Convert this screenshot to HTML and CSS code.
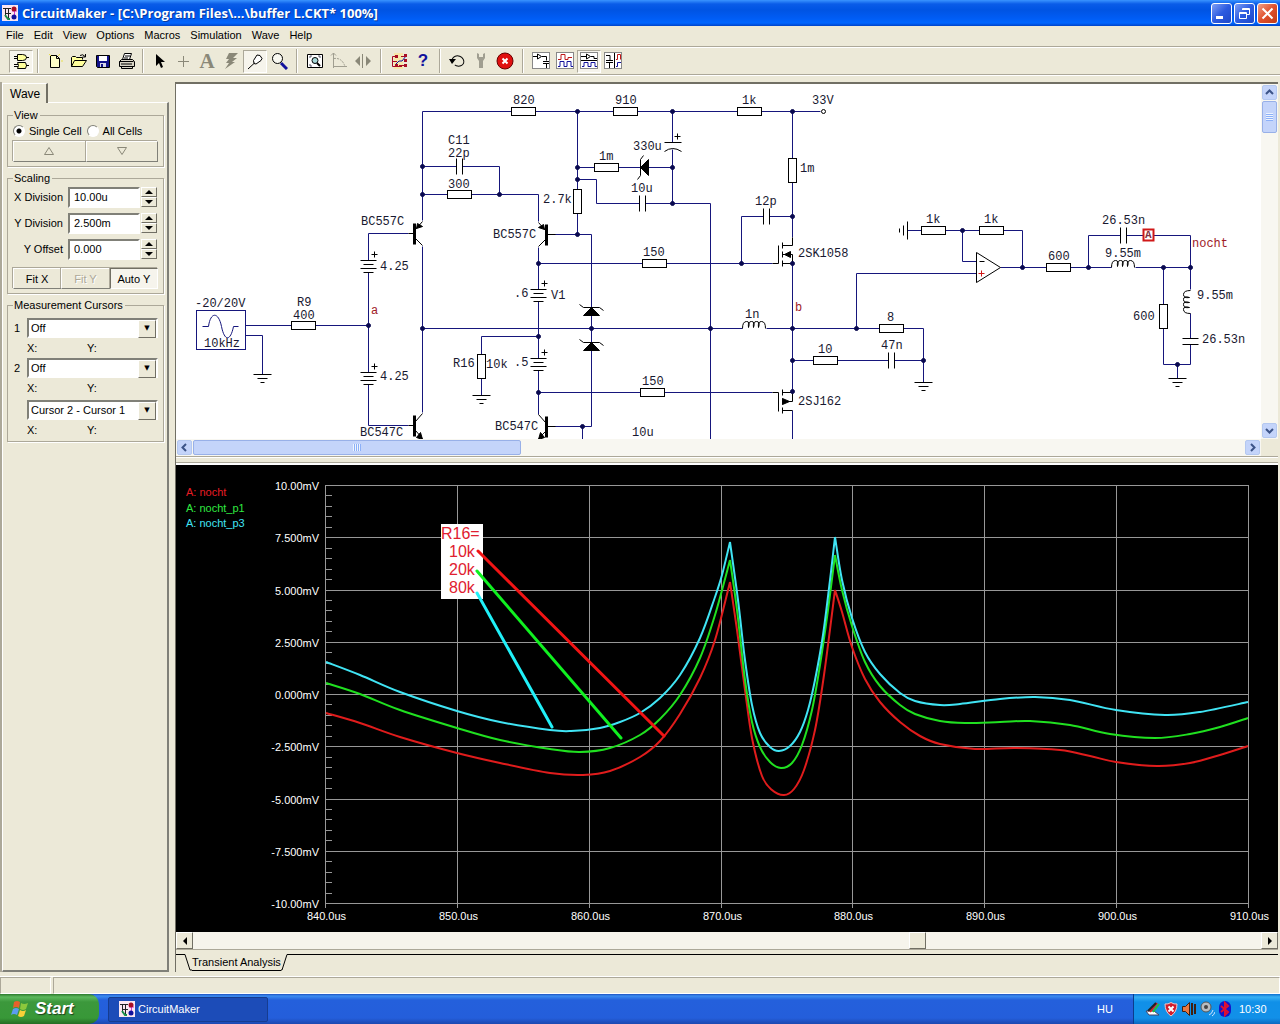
FILE: index.html
```html
<!DOCTYPE html>
<html lang="en">

<head>
  <meta charset="UTF-8">
  <meta name="viewport" content="width=device-width, initial-scale=1.0">
  <title>CircuitMaker</title>
  <link rel="stylesheet" href="styles.css">
</head>

<body>
  <svg class="symbols" aria-hidden="true">
    <defs>
      <symbol id="app-icon" viewBox="0 0 16 16">
        <rect width="16" height="16" fill="#fbe6f0" />
        <path d="M1 3.500h8M3.500 3v9M6.500 3v10M3 8.500h6" stroke="#222" fill="none" />
        <path d="M10 6h5M12.500 6v4" stroke="#d23ad2" fill="none" />
        <circle cx="12" cy="4" r="2.500" fill="#a80d24" />
        <circle cx="12" cy="12" r="2.500" fill="#12129c" />
        <path d="M3 10l3 4h2" stroke="#1b8f4a" stroke-width="2" fill="none" />
      </symbol>

      <g id="rh"><rect class="paper" x="-12" y="-4" width="24" height="8" /></g>
      <g id="rv"><rect class="paper" x="-4" y="-12" width="8" height="24" /></g>
      <g id="cap-h">
        <path class="gap" d="M-3 0h6" />
        <path d="M-3 -8v16M3 -8v16" />
      </g>
      <g id="battery">
        <path class="gap" d="M0 0v12" />
        <path d="M-8 0h16M-5 4h10M-8 8h16M-5 12h10M3 -6h6M6 -9v6" />
      </g>
      <g id="ground"><path d="M-9 0h18M-5 4h10M-2 8h4" /></g>
      <g id="coil">
        <path class="gap" d="M-12 0h24" />
        <path d="M-12 0q0-7 4-7t2 6q-1-6 3-6t2 6q-1-6 3-6t2 6q-1-6 3-6t4 7" />
      </g>
      <g id="zener">
        <path d="M-12 -3l4 3h16l4 3" />
        <path class="solid" d="M0 0l8 8h-16z" />
      </g>
    </defs>
  </svg>

  <header class="titlebar">
    <svg class="app-icon"><use href="#app-icon" /></svg>
    <h1>CircuitMaker - [C:\Program Files\...\buffer L.CKT* 100%]</h1>
    <div class="window-buttons">
      <button type="button" aria-label="Minimize"><svg viewBox="0 0 19 19"><path d="M4 13.500h7" stroke-width="3" /></svg></button>
      <button type="button" aria-label="Restore"><svg viewBox="0 0 19 19"><path d="M7.500 6V4.500h7v6H12M7 5.500h8" /><path d="M4.500 8.500h7v6h-7zM4 9.500h8" /></svg></button>
      <button type="button" class="close" aria-label="Close"><svg viewBox="0 0 19 19"><path d="M4.500 4.500l10 10M14.500 4.500l-10 10" stroke-width="2" /></svg></button>
    </div>
  </header>

  <nav class="menubar">
    <button type="button">File</button>
    <button type="button">Edit</button>
    <button type="button">View</button>
    <button type="button">Options</button>
    <button type="button">Macros</button>
    <button type="button">Simulation</button>
    <button type="button">Wave</button>
    <button type="button">Help</button>
  </nav>

  <div class="toolbar">
    <button type="button" class="pressed" aria-label="Parts"><svg viewBox="0 0 18 18"><path fill="#ffff9c" stroke="#000" d="M5.500 2.500h5q4 0 4 3t-4 3h-5z M5.500 10.500h8q2 3 0 6h-8q2-3 0-6z" /><path stroke="#000" d="M2 4.500h3M2 6.500h3M14 5.500h3M2 12.500h4M2 14.500h4M14 13.500h3" /></svg></button>
    <span class="sep"></span>
    <button type="button" aria-label="New"><svg viewBox="0 0 18 18"><path fill="#ffffc8" stroke="#000" d="M4.500 3.500h6l3 3v9h-9zM10.500 3.500v3h3" /><path stroke="#e8e04a" d="M3 2l2 2M14 2l-2 2M15 9h2" /></svg></button>
    <button type="button" aria-label="Open"><svg viewBox="0 0 18 18"><path fill="#ffff9c" stroke="#000" d="M1.500 14.500v-9l1-1h3l1 1h6v2M1.500 14.500l3-6h12l-4 6z" /><path fill="none" stroke="#000" d="M10 3.500q3-2 5 1M15.500 2v3h-3" /></svg></button>
    <button type="button" aria-label="Save"><svg viewBox="0 0 18 18"><path fill="#12128a" stroke="#000" d="M2.500 3.500h13v12h-12l-1-1z" /><path fill="#fff" d="M5 4h8v5H5z" /><path fill="#d8d8e8" d="M6 11h6v4H6z" /><path fill="#12128a" d="M7 12h2v3H7z" /></svg></button>
    <button type="button" aria-label="Print"><svg viewBox="0 0 18 18"><path fill="#fff" stroke="#000" d="M6.500 1.500h7l-2 6h-7zM7 4h5M6 6h4" /><path fill="#d8d4c4" stroke="#000" d="M1.500 9.500l2-2h11l2 2v5h-15zM1.500 9.500h14M3.500 14.500v2h11v-2M3 12h11" /></svg></button>
    <span class="sep narrow"></span>
    <button type="button" aria-label="Arrow"><svg viewBox="0 0 18 18"><path d="M6 2v12l3-3 2 5 2-1-2-5h4z" /></svg></button>
    <button type="button" aria-label="Wire"><svg viewBox="0 0 18 18"><path stroke="#8a8878" d="M4 9.500h11M9.500 4v11" /></svg></button>
    <button type="button" class="letter" aria-label="Text">A</button>
    <button type="button" aria-label="Delete"><svg viewBox="0 0 18 18"><path fill="#8a8878" d="M7 1h9l-5 5h4l-5 4h3L3 17l4-6H4l3-4H4z" /></svg></button>
    <button type="button" class="pressed" aria-label="Probe"><svg viewBox="0 0 18 18"><path fill="#fff" stroke="#000" d="M7.500 8.500L11 3l3 .500 2 3-1 2-5 3.500-2-.500zM8.500 11L2 17" /></svg></button>
    <button type="button" aria-label="Zoom"><svg viewBox="0 0 18 18"><circle cx="7.500" cy="6.500" r="5" fill="#f8f8f0" stroke="#000" /><path stroke="#12129c" stroke-width="3" d="M11 11l6 6" /></svg></button>
    <span class="sep wide"></span>
    <button type="button" aria-label="Zoom to fit"><svg viewBox="0 0 18 18"><path fill="#fff" stroke="#000" d="M1.500 2.500h15v13h-15z" /><path fill="none" stroke="#556" d="M4 6V4h2M12 4h2v2M4 12v2h2" /><circle cx="9" cy="8.500" r="3" fill="#a8d8d8" stroke="#000" /><path stroke="#000" stroke-width="2" d="M11 11l3 3" /></svg></button>
    <button type="button" aria-label="Rotate"><svg viewBox="0 0 18 18"><path fill="none" stroke="#a09e90" d="M3.500 1v15M1 3.500l2.500-2.500L6 3.500M4 14.500h13" /><path fill="none" stroke="#a09e90" stroke-dasharray="2 1" d="M4 6.500q8-1 11 8" /></svg></button>
    <button type="button" aria-label="Mirror"><svg viewBox="0 0 18 18"><path fill="#8a8878" d="M6 4v10L1 9zM12 4v10l5-5zM8 2h1v14H8z" /></svg></button>
    <span class="sep wide"></span>
    <button type="button" aria-label="Check wiring"><svg viewBox="0 0 18 18"><path fill="#ffe88a" opacity=".6" d="M4 1h9v16H4z" /><path fill="none" stroke="#a80d24" d="M5 4.500H2.500v10H12M2 9.500h5M11 4.500h5M9 13.500h7" /><path fill="none" stroke="#12129c" d="M5 13l4-4h3l4-5" /><path fill="#a80d24" d="M14 2h3v3h-3zM14 12h3v3h-3zM5 3h3v3H5zM5 12h3v3H5zM14 7h3v3h-3z" /></svg></button>
    <button type="button" class="help" aria-label="Help">?</button>
    <span class="sep"></span>
    <button type="button" aria-label="Reset"><svg viewBox="0 0 18 18"><ellipse cx="10" cy="9" rx="6" ry="5" fill="none" stroke="#000" stroke-dasharray="27 4" transform="rotate(200 10 9)" /><path d="M1 7h7l-4 5z" /></svg></button>
    <button type="button" aria-label="Step"><svg viewBox="0 0 18 18"><path fill="#a09e90" d="M5 1v5l2 3v7h4V9l2-3V1l-2 1v3H7V2z" /></svg></button>
    <button type="button" aria-label="Stop"><svg viewBox="0 0 18 18"><circle cx="9" cy="9" r="8" fill="#e01010" stroke="#600" /><path stroke="#fff" stroke-width="2" d="M6.500 6.500l5 5M11.500 6.500l-5 5" /></svg></button>
    <span class="sep wide"></span>
    <button type="button" aria-label="Schematic view"><svg viewBox="0 0 18 18"><rect class="frame" x=".500" y=".500" width="17" height="16" /><path fill="none" stroke="#000" d="M1 4.500h4M5.500 2v5l4-2.500zM10 4.500h4.500v4M11 9.500h6M11 11.500h6M14.500 12v4" /></svg></button>
    <button type="button" aria-label="Wave view"><svg viewBox="0 0 18 18"><rect class="frame" x=".500" y=".500" width="17" height="16" /><path fill="none" stroke="#c01818" d="M2 7.500h3v-5h4v5h3v-2h4" /><path fill="none" stroke="#12129c" d="M2 14.500h2v-5h4v5h3v-5h4v5h2" /></svg></button>
    <button type="button" class="pressed" aria-label="Split horizontal"><svg viewBox="0 0 18 18"><rect class="frame" x=".500" y=".500" width="17" height="16" /><path fill="none" stroke="#000" d="M1 4.500h5M6.500 2v5l4-2.500zM11 4.500h3v2h3M1 8.500h16" /><path fill="none" stroke="#12129c" d="M2 14.500h2v-4h4v4h3v-4h4v4h2" /></svg></button>
    <button type="button" aria-label="Split vertical"><svg viewBox="0 0 18 18"><rect class="frame" x=".500" y=".500" width="17" height="16" /><path fill="none" stroke="#000" d="M2 3.500h4v5M2 8.500h7M2 10.500h7M5.500 11v5M10.500 1v15" /><path fill="none" stroke="#c01818" d="M12 7.500h1.500v-5h3v5" /><path fill="none" stroke="#12129c" d="M12 14.500h1.500v-4H17" /></svg></button>
  </div>

  <main class="main">
    <aside class="sidebar">
      <div class="side-tab">Wave</div>
      <form class="side-panel">
        <fieldset>
          <legend>View</legend>
          <div class="radio-row">
            <label><input type="radio" name="cells" checked>Single Cell</label>
            <label><input type="radio" name="cells">All Cells</label>
          </div>
          <div class="btn-row view-btns">
            <button type="button" aria-label="Up"><svg viewBox="0 0 12 10"><path d="M6 1.500l4.500 7h-9z" /></svg></button>
            <button type="button" aria-label="Down"><svg viewBox="0 0 12 10"><path d="M6 8.500l4.500-7h-9z" /></svg></button>
          </div>
        </fieldset>

        <fieldset>
          <legend>Scaling</legend>
          <div class="scale-row">
            <label for="xdiv">X Division</label>
            <input type="text" id="xdiv" value="10.00u">
            <span class="spin"><button type="button" class="up" aria-label="X more"></button><button type="button" class="down" aria-label="X less"></button></span>
          </div>
          <div class="scale-row">
            <label for="ydiv">Y Division</label>
            <input type="text" id="ydiv" value="2.500m">
            <span class="spin"><button type="button" class="up" aria-label="Y more"></button><button type="button" class="down" aria-label="Y less"></button></span>
          </div>
          <div class="scale-row">
            <label for="yoff">Y Offset</label>
            <input type="text" id="yoff" value="0.000">
            <span class="spin"><button type="button" class="up" aria-label="Offset more"></button><button type="button" class="down" aria-label="Offset less"></button></span>
          </div>
          <div class="btn-row fit-btns">
            <button type="button">Fit X</button>
            <button type="button" disabled>Fit Y</button>
            <button type="button" class="pressed">Auto Y</button>
          </div>
        </fieldset>

        <fieldset class="cursors">
          <legend>Measurement Cursors</legend>
          <div class="cursor-row">
            <label for="cur1">1</label>
            <span class="combo"><select id="cur1"><option>Off</option></select></span>
          </div>
          <div class="xy"><span>X:</span><span>Y:</span></div>
          <div class="cursor-row">
            <label for="cur2">2</label>
            <span class="combo"><select id="cur2"><option>Off</option></select></span>
          </div>
          <div class="xy"><span>X:</span><span>Y:</span></div>
          <div class="cursor-row diff">
            <span class="combo"><select aria-label="Difference"><option>Cursor 2 - Cursor 1</option></select></span>
          </div>
          <div class="xy"><span>X:</span><span>Y:</span></div>
        </fieldset>
      </form>
    </aside>

    <section class="workspace">
      <div class="schematic">
        <div class="canvas">
          <svg class="circuit" width="1085" height="355" viewBox="176 84 1085 355">
            <g transform="translate(.500 .500)">
              <!-- wires -->
              <path class="wire" d="M422 220V111H820M792 111V237M422 166H499V194M422 194H538V221M577 111V234M577 167H672M577 179H596V203H710V439M672 111V142M672 149V203
                M368 425V233H408M368 425H408M422 246V412M245 325H368M245 335H262V374M422 328H923V382M538 336H481V395M538 247V414M538 263H772M538 392H772
                M549 234H591V426H549M582 426V439M741 263V216H792M792 263V392M792 410V439M792 360H923M856 328V273H976
                M907 230H1022V267M962 230V261H976M1000 267H1190V235H1088V267M1163 267V364H1190V267M1177 364V378" />
              <rect class="wire" x="196" y="310" width="49" height="39" />

              <!-- parts -->
              <g class="part">
                <use href="#rh" x="523" y="111" />
                <use href="#rh" x="625" y="111" />
                <use href="#rh" x="749" y="111" />
                <use href="#rh" x="459" y="194" />
                <use href="#rh" x="606" y="167" />
                <use href="#rh" x="654" y="263" />
                <use href="#rh" x="652" y="392" />
                <use href="#rh" x="303" y="325" />
                <use href="#rh" x="891" y="328" />
                <use href="#rh" x="825" y="360" />
                <use href="#rh" x="933" y="230" />
                <use href="#rh" x="991" y="230" />
                <use href="#rh" x="1058" y="267" />
                <use href="#rv" x="577" y="201" />
                <use href="#rv" x="792" y="170" />
                <use href="#rv" x="481" y="366" />
                <use href="#rv" x="1163" y="316" />
                <use href="#cap-h" x="459" y="166" />
                <use href="#cap-h" x="642" y="203" />
                <use href="#cap-h" x="766" y="216" />
                <use href="#cap-h" x="891" y="360" />
                <use href="#cap-h" x="1123" y="235" />
                <use href="#cap-h" transform="translate(1190 341) rotate(90)" />
                <path d="M664 142H681M664 151Q672 145 681 151M674 136h6M677 133v6" />
                <use href="#battery" x="368" y="260" />
                <use href="#battery" x="368" y="372" />
                <use href="#battery" x="538" y="289" />
                <use href="#battery" x="538" y="358" />
                <use href="#ground" x="262" y="374" />
                <use href="#ground" x="481" y="395" />
                <use href="#ground" x="923" y="382" />
                <use href="#ground" x="1177" y="378" />
                <use href="#ground" transform="translate(907 230) rotate(90)" />
                <use href="#coil" x="754" y="328" />
                <use href="#coil" x="1123" y="267" />
                <use href="#coil" transform="translate(1190 301) rotate(-90)" />
                <use href="#zener" x="591" y="307" />
                <use href="#zener" x="591" y="342" />
                <use href="#zener" transform="translate(640 167) rotate(-90)" />

                <!-- bipolar transistors -->
                <path class="bar" d="M414 223v21M414 415v21M546 224v21M546 416v21" />
                <path d="M408 233h6M415 229l7-8M415 238l7 7M408 425h6M415 421l7-8M415 430l7 8M545 230l-7-8M545 239l-7 7M547 234h8M545 422l-7-8M545 431l-7 7M547 426h8" />
                <path class="solid" d="M416 228l1-5 5 3zM422 439l-6-2 4-5zM544 229l-1-5-5 3zM538 439l6-2-4-5z" />

                <!-- power mosfets -->
                <path d="M772 263h6v-18M782 242v6M782 251v6M782 260v6M782 245h10v-8M782 254h10v9h-10" />
                <path class="solid" d="M784 254l6-3v6z" />
                <path d="M772 392h6v19M782 389v6M782 398v6M782 407v6M782 392h10v9h-10M782 410h10" />
                <path class="solid" d="M789 401l-7-3v6z" />

                <!-- op amp, supply pin -->
                <path class="paper" d="M976 252v30l24-15zM979 261h5" />
                <circle class="paper" cx="823" cy="111" r="2" />
              </g>
              <path class="wire" d="M202 326h6c2-15 10-15 13 0s9 15 12 0h5" />
              <path class="plus" d="M978 273h6M981 270v6" />
              <rect class="probe" x="1143" y="229" width="10" height="11" />

              <g class="nodes">
                <circle cx="422" cy="166" r="2" /><circle cx="422" cy="194" r="2" /><circle cx="499" cy="194" r="2" />
                <circle cx="577" cy="111" r="2" /><circle cx="672" cy="111" r="2" /><circle cx="792" cy="111" r="2" />
                <circle cx="577" cy="167" r="2" /><circle cx="577" cy="179" r="2" /><circle cx="672" cy="167" r="2" />
                <circle cx="672" cy="203" r="2" /><circle cx="577" cy="234" r="2" /><circle cx="792" cy="216" r="2" />
                <circle cx="538" cy="263" r="2" /><circle cx="741" cy="263" r="2" /><circle cx="792" cy="263" r="2" />
                <circle cx="368" cy="325" r="2" /><circle cx="422" cy="328" r="2" /><circle cx="538" cy="336" r="2" />
                <circle cx="591" cy="328" r="2" /><circle cx="710" cy="328" r="2" /><circle cx="792" cy="328" r="2" />
                <circle cx="856" cy="328" r="2" /><circle cx="792" cy="360" r="2" /><circle cx="923" cy="360" r="2" />
                <circle cx="538" cy="392" r="2" /><circle cx="792" cy="391" r="2" /><circle cx="582" cy="426" r="2" />
                <circle cx="962" cy="230" r="2" /><circle cx="1022" cy="267" r="2" /><circle cx="1088" cy="267" r="2" />
                <circle cx="1163" cy="267" r="2" /><circle cx="1190" cy="267" r="2" /><circle cx="1177" cy="364" r="2" />
              </g>
            </g>

            <g class="labels">
              <text x="513" y="104">820</text>
              <text x="615" y="104">910</text>
              <text x="742" y="104">1k</text>
              <text x="812" y="104">33V</text>
              <text x="448" y="144">C11</text>
              <text x="448" y="157">22p</text>
              <text x="448" y="188">300</text>
              <text x="599" y="160">1m</text>
              <text x="633" y="150">330u</text>
              <text x="631" y="192">10u</text>
              <text x="543" y="203">2.7k</text>
              <text x="361" y="225">BC557C</text>
              <text x="493" y="238">BC557C</text>
              <text x="800" y="172">1m</text>
              <text x="755" y="205">12p</text>
              <text x="798" y="257">2SK1058</text>
              <text x="643" y="256">150</text>
              <text x="380" y="270">4.25</text>
              <text x="380" y="380">4.25</text>
              <text x="195" y="307">-20/20V</text>
              <text x="204" y="347">10kHz</text>
              <text x="297" y="306">R9</text>
              <text x="293" y="319">400</text>
              <text x="453" y="367">R16</text>
              <text x="486" y="368">10k</text>
              <text x="514" y="297">.6</text>
              <text x="514" y="366">.5</text>
              <text x="551" y="299">V1</text>
              <text x="745" y="318">1n</text>
              <text x="887" y="321">8</text>
              <text x="818" y="353">10</text>
              <text x="881" y="349">47n</text>
              <text x="642" y="385">150</text>
              <text x="798" y="405">2SJ162</text>
              <text x="360" y="436">BC547C</text>
              <text x="495" y="430">BC547C</text>
              <text x="632" y="436">10u</text>
              <text x="926" y="223">1k</text>
              <text x="984" y="223">1k</text>
              <text x="1048" y="260">600</text>
              <text x="1102" y="224">26.53n</text>
              <text x="1105" y="257">9.55m</text>
              <text x="1197" y="299">9.55m</text>
              <text x="1133" y="320">600</text>
              <text x="1202" y="343">26.53n</text>
              <text class="net" x="371" y="314">a</text>
              <text class="net" x="795" y="311">b</text>
              <text class="net" x="1192" y="247">nocht</text>
              <text class="probe-text" x="1145" y="238">A</text>
            </g>
          </svg>
        </div>
        <div class="vscroll">
          <button type="button" aria-label="Scroll up"><svg viewBox="0 0 9 9"><path d="M1 6l3.500-3.500L8 6" /></svg></button>
          <div class="thumb"></div>
          <button type="button" class="last" aria-label="Scroll down"><svg viewBox="0 0 9 9"><path d="M1 3l3.500 3.500L8 3" /></svg></button>
        </div>
        <div class="hscroll">
          <button type="button" aria-label="Scroll left"><svg viewBox="0 0 9 9"><path d="M6 1L2.500 4.500 6 8" /></svg></button>
          <div class="thumb"></div>
          <button type="button" class="last" aria-label="Scroll right"><svg viewBox="0 0 9 9"><path d="M3 1l3.500 3.500L3 8" /></svg></button>
        </div>
      </div>

      <div class="splitter"></div>

      <div class="wave">
        <svg class="plot" viewBox="176 465 1102 467" preserveAspectRatio="xMinYMin meet">
          <g id="grid"></g>
          <g class="legend">
            <text class="red" x="186" y="496">A: nocht</text>
            <text class="green" x="186" y="512">A: nocht_p1</text>
            <text class="cyan" x="186" y="527">A: nocht_p3</text>
          </g>
          <g id="traces"></g>
          <rect x="441" y="524" width="42" height="75" fill="#fff" />
          <g class="note">
            <text x="441" y="539">R16=</text>
            <text x="449" y="557">10k</text>
            <text x="449" y="575">20k</text>
            <text x="449" y="593">80k</text>
          </g>
          <g class="pointers">
            <path class="red" d="M478 551L664 736" />
            <path class="green" d="M477 571L621 738" />
            <path class="cyan" d="M477 593L552 727" />
          </g>
        </svg>
      </div>

      <div class="wave-scroll">
        <button type="button" class="left" aria-label="Earlier"></button>
        <div class="thumb"></div>
        <button type="button" class="right" aria-label="Later"></button>
      </div>

      <div class="sheet-tabs">
        <svg class="tab-edge" viewBox="0 0 16 18"><path d="M0 .500h9l5 15.500h2" /></svg>
        <span class="sheet-name">Transient Analysis</span>
        <svg class="tab-edge right" viewBox="0 0 8 18"><path d="M0 16h1L6 .500h2" /></svg>
        <span class="sheet-line"></span>
      </div>
    </section>
  </main>

  <div class="statusbar"><span></span><span></span></div>

  <footer class="taskbar">
    <button type="button" class="start">
      <svg viewBox="0 0 18 18"><path fill="#e8602c" d="M3 2q3-2 6 0L8 8Q5 6 2 8z" /><path fill="#8cc83c" d="M10 3q3 2 7 0l-2 6q-3 2-6 0z" /><path fill="#5c9cf0" d="M2 9q3-2 6 0l-2 6q-3-2-6 0z" /><path fill="#f8d038" d="M9 10q3 2 6 0l-2 6q-3 2-6 0z" /></svg>
      Start
    </button>
    <button type="button" class="task"><svg class="app-icon"><use href="#app-icon" /></svg>CircuitMaker</button>
    <span class="lang">HU</span>
    <div class="tray">
      <svg viewBox="0 0 16 16"><path fill="#fff" stroke="#446" d="M1 10l8 0 5 4H4z" /><path stroke="#e02020" stroke-width="2" d="M5 11l7-9" /><path stroke="#20c040" stroke-width="2" d="M8 11l6-8" /><path stroke="#222" stroke-width="2" d="M3 10l8-8" /></svg>
      <svg viewBox="0 0 16 16"><path fill="#d01c2c" stroke="#f0c8c8" d="M8 1.500q3 2 6 1.500 0 8-6 12Q2 11 2 3q3 .500 6-1.500z" /><path stroke="#fff" stroke-width="2" d="M5.500 5.500l5 5M10.500 5.500l-5 5" /></svg>
      <svg viewBox="0 0 16 16"><path fill="#e87840" stroke="#402010" d="M1.500 5.500h3l4-4v13l-4-4h-3z" /><path fill="none" stroke="#402010" stroke-width="2" d="M11 2v12M14 3v10" /></svg>
      <svg viewBox="0 0 16 16"><circle cx="7" cy="6" r="5" fill="#b8bcc0" stroke="#555" /><circle cx="7" cy="6" r="2" fill="#444" /><path fill="none" stroke="#cfe4ff" d="M10 14q3-1 4-5M13 15q2-1 3-4" /></svg>
      <svg viewBox="0 0 16 16"><rect x="2" width="12" height="16" rx="6" fill="#1414c8" /><path fill="none" stroke="#e01030" stroke-width="2" d="M4 5l7 6-3 3V2l3 3-7 6" /></svg>
      <span class="clock">10:30</span>
    </div>
  </footer>

  <script>
    const NS = 'http://www.w3.org/2000/svg';
    const grid = document.getElementById('grid');
    const traces = document.getElementById('traces');

    const left = 325, top_ = 485, right = 1248, bottom = 903;
    const xLabels = ['840.0us', '850.0us', '860.0us', '870.0us', '880.0us', '890.0us', '900.0us', '910.0us'];
    const yLabels = ['10.00mV', '7.500mV', '5.000mV', '2.500mV', '0.000mV', '-2.500mV', '-5.000mV', '-7.500mV', '-10.00mV'];

    function add(parent, tag, attrs, text) {
      const el = document.createElementNS(NS, tag);
      for (const key in attrs) el.setAttribute(key, attrs[key]);
      if (text) el.textContent = text;
      parent.appendChild(el);
    }

    let d = '';
    xLabels.forEach((label, i) => {
      const x = Math.round(left + (right - left) * i / 7) + 0.5;
      d += `M${x} ${top_}V${bottom + 5}`;
      add(grid, 'text', { x: x + 1, y: 920, 'text-anchor': 'middle' }, label);
    });
    yLabels.forEach((label, i) => {
      const y = Math.round(top_ + (bottom - top_) * i / 8) + 0.5;
      d += `M${left} ${y}H${right + 1}`;
      add(grid, 'text', { x: 319, y: y + 4, 'text-anchor': 'end' }, label);
    });
    for (let i = 0; i < 40; i++) {
      d += `M${left} ${Math.round(top_ + (bottom - top_) * i / 40) + 0.5}h7`;
    }
    add(grid, 'path', { d });

    // each trace is three runs that meet in the two sharp peaks
    const data = {
      red: [
        [[326, 713], [360, 723], [400, 737], [457, 753], [500, 763], [550, 773], [583, 775], [610, 771], [640, 757], [660, 741], [680, 714], [700, 678], [715, 640], [730, 582]],
        [[730, 582], [737, 630], [745, 690], [752, 738], [762, 776], [772, 790], [784, 795], [794, 789], [804, 770], [815, 730], [824, 675], [835, 590]],
        [[835, 590], [842, 612], [852, 647], [865, 679], [880, 702], [900, 722], [920, 736], [940, 744], [975, 749], [1015, 748], [1060, 750], [1090, 756], [1116, 762], [1157, 766], [1190, 763], [1220, 755], [1248, 746]]
      ],
      green: [
        [[326, 683], [360, 694], [400, 710], [457, 728], [500, 740], [550, 749], [580, 752], [610, 748], [640, 735], [660, 719], [680, 695], [700, 658], [715, 615], [730, 560]],
        [[730, 560], [737, 610], [745, 680], [752, 722], [760, 747], [770, 762], [781, 768], [792, 763], [802, 745], [812, 710], [820, 665], [828, 610], [835, 555]],
        [[835, 555], [842, 590], [852, 626], [865, 662], [880, 686], [900, 705], [915, 714], [940, 721], [965, 723], [1000, 722], [1030, 721], [1070, 725], [1110, 734], [1155, 738], [1190, 734], [1220, 727], [1248, 718]]
      ],
      cyan: [
        [[326, 662], [360, 675], [400, 692], [457, 711], [500, 722], [550, 730], [571, 731], [600, 728], [620, 722], [640, 713], [660, 698], [680, 675], [700, 638], [715, 597], [722, 575], [730, 542]],
        [[730, 542], [738, 600], [745, 660], [752, 705], [760, 733], [770, 747], [779, 751], [790, 746], [800, 732], [808, 710], [815, 680], [823, 635], [830, 580], [835, 537]],
        [[835, 537], [842, 580], [852, 618], [865, 652], [880, 674], [900, 693], [915, 701], [940, 705], [960, 704], [1000, 699], [1035, 697], [1070, 700], [1116, 710], [1165, 715], [1200, 712], [1248, 702]]
      ]
    };

    function smooth(p) {
      let s = `M${p[0]}`;
      for (let i = 0; i < p.length - 1; i++) {
        const a = p[i - 1] || p[i], b = p[i], c = p[i + 1], e = p[i + 2] || c;
        s += `C${b[0] + (c[0] - a[0]) / 6} ${b[1] + (c[1] - a[1]) / 6} ${c[0] - (e[0] - b[0]) / 6} ${c[1] - (e[1] - b[1]) / 6} ${c}`;
      }
      return s;
    }

    for (const name in data) {
      add(traces, 'path', { class: name, d: data[name].map(smooth).join('') });
    }
  </script>
</body>

</html>
```

FILE: styles.css
```css
* {
  box-sizing: border-box;
}

html,
body {
  margin: 0;
  height: 100%;
  overflow: hidden;
}

body {
  display: flex;
  flex-direction: column;
  background: #ece9d8;
  color: #000;
  font: 11px/14px "Liberation Sans", Arial, sans-serif;
}

button,
input,
select {
  font: inherit;
  color: inherit;
  margin: 0;
  padding: 0;
  border: 0;
  border-radius: 0;
  background: none;
}

.symbols {
  position: absolute;
  width: 0;
  height: 0;
}

.app-icon {
  width: 16px;
  height: 16px;
  flex: none;
}

/* title bar */
.titlebar {
  flex: none;
  display: flex;
  align-items: center;
  height: 26px;
  padding: 0 2px;
  background: linear-gradient(#3a94ff 0, #0a5ce8 4px, #0054e3 10px, #005cf4 18px, #0066ff 23px, #0043c8 26px);
}

.titlebar h1 {
  flex: 1;
  margin: 0 0 0 4px;
  font: 700 13px/20px "Open Sans", sans-serif;
  color: #fff;
  text-shadow: 1px 1px 0 #0a3a9c;
  white-space: nowrap;
}

.window-buttons {
  display: flex;
  gap: 2px;
}

.window-buttons button {
  width: 21px;
  height: 21px;
  border: 1px solid #fff;
  border-radius: 3px;
  background: linear-gradient(135deg, #7f9ff5, #2c5be0 50%, #1e48c8);
}

.window-buttons .close {
  background: linear-gradient(135deg, #f0a088, #e0502c 50%, #c03c18);
}

.window-buttons svg {
  display: block;
  width: 19px;
  height: 19px;
  fill: none;
  stroke: #fff;
}

/* menu and toolbar */
.menubar {
  flex: none;
  display: flex;
  gap: 10px;
  height: 21px;
  padding: 0 6px 2px;
  border-bottom: 1px solid #aca899;
}

.toolbar {
  flex: none;
  display: flex;
  align-items: center;
  height: 28px;
  padding-left: 9px;
  border-top: 1px solid #fff;
  border-bottom: 1px solid #aca899;
}

.toolbar button {
  display: flex;
  align-items: center;
  justify-content: center;
  width: 24px;
  height: 23px;
}

.toolbar svg {
  flex: none;
  width: 18px;
  height: 18px;
}

.toolbar .frame {
  fill: #fff;
  stroke: #888;
}

.toolbar .letter {
  font: bold 21px/22px "Liberation Serif", serif;
  color: #8a8878;
}

.toolbar .help {
  font: bold 17px/22px "Liberation Sans", sans-serif;
  color: #12129c;
}

.pressed {
  background: #f6f4ec;
  border: 1px solid;
  border-color: #aca899 #fff #fff #aca899;
}

.sep {
  width: 2px;
  height: 24px;
  margin: 0 4px;
  border-left: 1px solid #aca899;
  border-right: 1px solid #fff;
}

.sep.narrow {
  margin: 0 3px;
}

.sep.wide {
  margin: 0 5px;
}

/* main area */
.main {
  flex: 1;
  min-height: 0;
  display: flex;
  padding: 6px 2px 4px 0;
  border-top: 1px solid #fff;
}

.sidebar {
  flex: none;
  width: 169px;
  display: flex;
  flex-direction: column;
  border-left: 2px solid #aca899;
  padding-top: 1px;
}

.side-tab {
  position: relative;
  width: 46px;
  height: 20px;
  padding: 3px 0 0 7px;
  border-top: 1px solid #fff;
  border-left: 1px solid #fff;
  border-right: 2px solid #716f64;
  background: #ece9d8;
  font-size: 12px;
}

.side-panel {
  flex: 1;
  margin-top: -1px;
  padding: 6px 3px 0 4px;
  border: 1px solid #fff;
  border-right: 2px solid #808078;
  border-bottom: 2px solid #808078;
}

fieldset {
  min-width: 0;
  margin: 0 0 5px;
  padding: 0 5px 4px;
  border: 1px solid #aca899;
  box-shadow: 1px 1px 0 #fff;
}

legend {
  height: 12px;
  line-height: 12px;
  padding: 0 2px 0 1px;
}

.radio-row {
  display: flex;
  gap: 5px;
  height: 20px;
  align-items: center;
  white-space: nowrap;
}

.radio-row label {
  display: flex;
  align-items: center;
  gap: 4px;
}

.radio-row input {
  appearance: none;
  width: 12px;
  height: 12px;
  border: 1px solid;
  border-color: #808078 #fff #fff #808078;
  border-radius: 50%;
  background: #fff;
}

.radio-row input:checked {
  background: radial-gradient(circle, #000 2px, #fff 3px);
}

.btn-row {
  display: flex;
}

.btn-row button {
  flex: 1;
  height: 21px;
  border: 1px solid;
  border-color: #fff #808078 #808078 #fff;
  box-shadow: -1px -1px 0 #aca899;
}

.btn-row .pressed {
  border-color: #716f64 #fff #fff #716f64;
  background: #f6f4ec;
}

.btn-row button:disabled {
  color: #aca899;
  text-shadow: 1px 1px 0 #fff;
}

.view-btns svg {
  width: 12px;
  height: 10px;
  fill: none;
  stroke: #8a8878;
}

.scale-row {
  display: flex;
  align-items: center;
  height: 26px;
}

.scale-row label {
  width: 50px;
  text-align: right;
  white-space: nowrap;
}

.scale-row input {
  width: 72px;
  height: 21px;
  margin: 0 1px 0 5px;
  padding: 0 4px;
  border: 2px solid;
  border-color: #808078 #fff #fff #808078;
  background: #fff;
}

.spin button {
  display: block;
  width: 16px;
  height: 10px;
  border: 1px solid;
  border-color: #fff #716f64 #716f64 #fff;
}

.spin button::before {
  content: "";
  display: block;
  width: 0;
  margin: 0 auto;
  border: 4px solid transparent;
}

.spin .up::before {
  border-top: 0;
  border-bottom-color: #000;
}

.spin .down::before {
  border-bottom: 0;
  border-top-color: #000;
}

.fit-btns {
  padding-top: 6px;
}

.cursors {
  padding-bottom: 1px;
}

.cursor-row {
  display: flex;
  align-items: center;
  height: 20px;
}

.cursors legend + .cursor-row {
  margin-top: 7px;
}

.cursor-row label {
  width: 14px;
  padding-left: 1px;
}

.cursor-row.diff {
  margin-top: 2px;
  padding-left: 14px;
}

.combo {
  position: relative;
  flex: 1;
}

.combo select {
  display: block;
  appearance: none;
  width: 100%;
  height: 20px;
  padding-left: 2px;
  border: 2px solid;
  border-color: #808078 #fff #fff #808078;
  background: #fff;
}

.combo::after {
  content: "▼";
  position: absolute;
  top: 2px;
  right: 2px;
  width: 16px;
  height: 16px;
  border: 1px solid;
  border-color: #fff #716f64 #716f64 #fff;
  background: #ece9d8;
  font: 7px/14px "DejaVu Sans", sans-serif;
  text-align: center;
  pointer-events: none;
}

.xy {
  display: flex;
  height: 20px;
  padding-left: 14px;
  line-height: 20px;
}

.xy span {
  width: 60px;
}

/* workspace */
.workspace {
  flex: 1;
  min-width: 0;
  display: flex;
  flex-direction: column;
  margin-left: 6px;
  border-left: 1px solid #716f64;
  border-top: 2px solid #716f64;
}

.schematic {
  flex: 372 1 0;
  min-height: 0;
  display: grid;
  grid-template-columns: 1fr 17px;
  grid-template-rows: 1fr 17px;
}

.canvas {
  overflow: hidden;
  background: #fff;
}

.circuit {
  display: block;
}

.wire {
  fill: none;
  stroke: #16167c;
}

.part {
  fill: none;
  stroke: #000;
}

.paper {
  fill: #fff;
}

.gap {
  stroke: #fff;
  stroke-width: 2;
}

.solid {
  fill: #000;
}

.bar {
  stroke-width: 3;
}

.plus,
.probe {
  fill: none;
  stroke: #d01818;
}

.probe {
  fill: #fff;
  stroke-width: 2;
}

.nodes {
  fill: #0a0a50;
  stroke: #0a0a50;
}

.labels {
  font: 12px "Liberation Mono", "Courier New", monospace;
  fill: #181830;
}

.labels .net {
  fill: #a02028;
}

.labels .probe-text {
  font-size: 11px;
  font-weight: bold;
  fill: #803040;
}

.vscroll,
.hscroll {
  display: flex;
  padding: 1px;
  background: #f8f7f1;
}

.vscroll {
  flex-direction: column;
}

.vscroll button,
.hscroll button {
  flex: none;
  display: flex;
  align-items: center;
  justify-content: center;
  width: 15px;
  height: 15px;
  border: 1px solid #b4c8f0;
  border-radius: 2px;
  background: #c4d4fa;
}

.vscroll svg,
.hscroll svg {
  width: 9px;
  height: 9px;
  fill: none;
  stroke: #3c5488;
  stroke-width: 2;
}

.vscroll .thumb,
.hscroll .thumb {
  display: flex;
  border: 1px solid #98b0e8;
  border-radius: 2px;
  background: #c4d4fa;
}

.vscroll .thumb {
  height: 32px;
  margin-top: 1px;
}

.hscroll .thumb {
  width: 328px;
  margin-left: 1px;
}

.thumb::before {
  content: "";
  margin: auto;
}

.vscroll .thumb::before {
  width: 7px;
  height: 8px;
  background: repeating-linear-gradient(#eef4fe 0 1px, #8cb0f8 1px 2px);
}

.hscroll .thumb::before {
  width: 8px;
  height: 7px;
  background: repeating-linear-gradient(90deg, #eef4fe 0 1px, #8cb0f8 1px 2px);
}

.vscroll .last {
  margin-top: auto;
}

.hscroll .last {
  margin-left: auto;
}

.splitter {
  flex: none;
  height: 9px;
  border-top: 1px solid #aca899;
  border-bottom: 2px solid #fff;
  background: linear-gradient(#fff 0 1px, #ece9d8 1px 5px, #aca899 5px 6px);
}

/* wave plot */
.wave {
  flex: 467 1 0;
  min-height: 0;
  background: #000;
}

.plot {
  display: block;
  width: 100%;
  height: 100%;
  font: 11px "Liberation Sans", Arial, sans-serif;
}

#grid path {
  fill: none;
  stroke: #989898;
}

#grid text {
  fill: #fff;
}

#traces path {
  fill: none;
  stroke-width: 2;
}

#traces .red { stroke: #e01c1c; }
#traces .green { stroke: #20e020; }
#traces .cyan { stroke: #40e4f4; }

.legend .red { fill: #e81c24; }
.legend .green { fill: #30e840; }
.legend .cyan { fill: #40e4f4; }

.note {
  font-size: 16px;
  fill: #e02030;
}

.pointers {
  stroke-width: 3;
  stroke-linecap: round;
}

.pointers .red { stroke: #f01414; }
.pointers .green { stroke: #10f020; }
.pointers .cyan { stroke: #20f0f8; }

.wave-scroll {
  flex: none;
  display: flex;
  height: 18px;
  border-bottom: 1px solid #aca899;
  background: #f6f4ec;
}

.wave-scroll button,
.wave-scroll .thumb {
  width: 17px;
  border: 1px solid;
  border-color: #fff #716f64 #716f64 #fff;
  background: #ece9d8;
}

.wave-scroll .thumb {
  margin-left: 65%;
  margin-right: auto;
}

.wave-scroll button::before {
  content: "";
  display: block;
  width: 0;
  margin: 0 auto;
  border: 4px solid transparent;
}

.wave-scroll .left::before {
  border-left: 0;
  border-right-color: #000;
}

.wave-scroll .right::before {
  border-right: 0;
  border-left-color: #000;
}

.sheet-tabs {
  flex: none;
  display: flex;
  height: 22px;
  padding-top: 4px;
}

.tab-edge {
  width: 16px;
  height: 18px;
  fill: none;
  stroke: #000;
}

.tab-edge.right {
  width: 8px;
}

.sheet-name {
  height: 17px;
  border-bottom: 1px solid #000;
  line-height: 17px;
  white-space: nowrap;
}

.sheet-line {
  flex: 1;
  border-top: 1px solid #000;
}

.statusbar {
  flex: none;
  display: flex;
  gap: 2px;
  height: 18px;
  border-top: 1px solid #fff;
}

.statusbar span {
  flex: 1;
  border: 1px solid #aca899;
  border-right-color: #fff;
  border-bottom-color: #fff;
}

.statusbar span:first-child {
  flex: 0 0 51px;
}

/* taskbar */
.taskbar {
  flex: none;
  display: flex;
  align-items: center;
  height: 30px;
  background: linear-gradient(#1c50c0 0, #3c8cf0 2px, #2460dc 6px, #245edb 24px, #1c48b0 30px);
  color: #fff;
}

.start {
  display: flex;
  align-items: center;
  gap: 6px;
  width: 99px;
  height: 30px;
  padding-left: 11px;
  border-radius: 0 10px 10px 0;
  background: linear-gradient(#2c7a2c 0, #5cb85c 3px, #3c983c 8px, #389838 24px, #246c24 30px);
  font: italic bold 17px/24px "Liberation Sans", sans-serif;
  text-shadow: 1px 1px 1px #1c401c;
}

.start svg {
  width: 18px;
  height: 18px;
}

.task {
  display: flex;
  align-items: center;
  gap: 3px;
  width: 160px;
  height: 25px;
  margin-left: 9px;
  padding-left: 10px;
  border: 1px solid #163c90;
  border-radius: 2px;
  background: #1c4cb8;
}

.lang {
  margin: 0 20px 0 auto;
}

.tray {
  display: flex;
  align-items: center;
  gap: 2px;
  width: 147px;
  height: 30px;
  padding-left: 11px;
  border-left: 1px solid #0c3c8c;
  background: linear-gradient(#0c70d0 0, #38b0f4 3px, #1090e8 8px, #1290e8 24px, #0c68c0 30px);
}

.tray svg {
  width: 16px;
  height: 16px;
}

.clock {
  margin-left: 4px;
}
```
